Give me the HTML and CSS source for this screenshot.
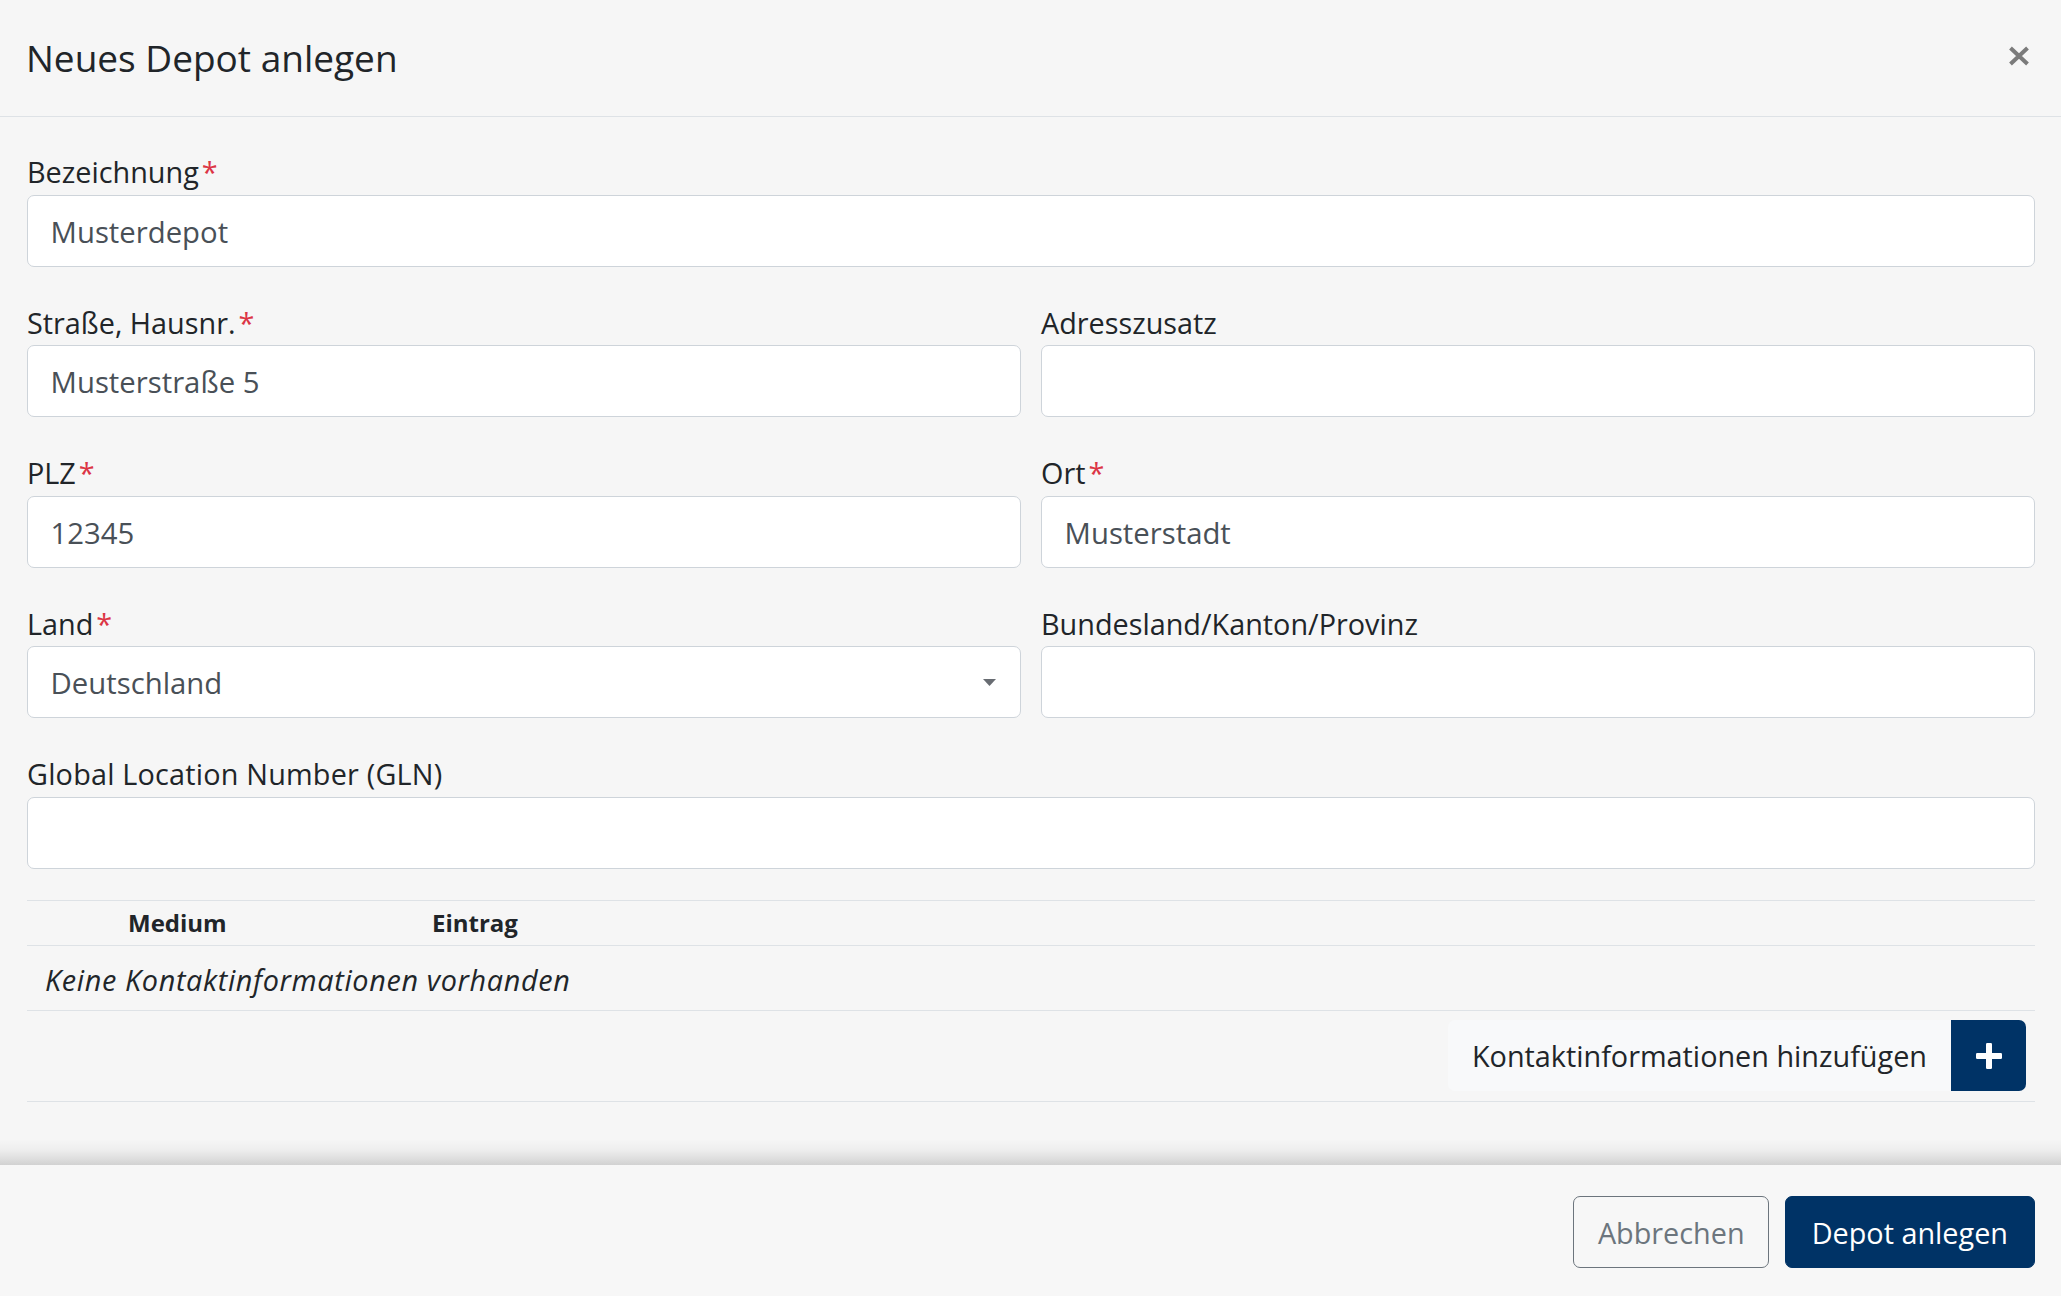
FILE: index.html
```html
<!DOCTYPE html>
<html lang="de">
<head>
<meta charset="utf-8">
<title>Neues Depot anlegen</title>
<link rel="stylesheet" href="styles.css">
</head>
<body>
<div class="modal">
  <header class="modal-header">
    <h5 class="modal-title">Neues Depot anlegen</h5>
    <button class="close" type="button" aria-label="Schließen">
      <svg width="22" height="20" viewBox="0 0 22 20"><path d="M2.5 2 L19.5 18 M19.5 2 L2.5 18" stroke="#7b7b7b" stroke-width="4" fill="none"/></svg>
    </button>
  </header>

  <main class="modal-body">
    <div class="form-group">
      <label class="label">Bezeichnung<span class="req">*</span></label>
      <input class="form-control" type="text" value="Musterdepot">
    </div>

    <div class="form-row">
      <div class="form-group">
        <label class="label">Straße, Hausnr.<span class="req">*</span></label>
        <input class="form-control" type="text" value="Musterstraße 5">
      </div>
      <div class="form-group">
        <label class="label">Adresszusatz</label>
        <input class="form-control" type="text" value="">
      </div>
    </div>

    <div class="form-row">
      <div class="form-group">
        <label class="label">PLZ<span class="req">*</span></label>
        <input class="form-control" type="text" value="12345">
      </div>
      <div class="form-group">
        <label class="label">Ort<span class="req">*</span></label>
        <input class="form-control" type="text" value="Musterstadt">
      </div>
    </div>

    <div class="form-row">
      <div class="form-group">
        <label class="label">Land<span class="req">*</span></label>
        <div class="form-control select">
          <span>Deutschland</span>
          <svg class="caret" width="13" height="7" viewBox="0 0 13 7"><path d="M0 0 H13 L6.5 7 Z" fill="#686c72"/></svg>
        </div>
      </div>
      <div class="form-group">
        <label class="label">Bundesland/Kanton/Provinz</label>
        <input class="form-control" type="text" value="">
      </div>
    </div>

    <div class="form-group last">
      <label class="label gln">Global Location Number (GLN)</label>
      <input class="form-control" type="text" value="">
    </div>

    <table class="contacts">
      <colgroup>
        <col class="col-icon">
        <col class="col-medium">
        <col>
      </colgroup>
      <thead>
        <tr><th></th><th>Medium</th><th>Eintrag</th></tr>
      </thead>
      <tbody>
        <tr><td class="empty" colspan="3">Keine Kontaktinformationen vorhanden</td></tr>
      </tbody>
    </table>
    <div class="actions">
      <div class="btn-group">
        <span class="btn-add-label">Kontaktinformationen hinzufügen</span>
        <button class="btn-plus" type="button" aria-label="Hinzufügen">
          <svg width="26" height="26" viewBox="0 0 26 26"><rect x="10" y="0" width="6" height="26" rx="1.2" fill="#fff"/><rect x="0" y="10" width="26" height="6" rx="1.2" fill="#fff"/></svg>
        </button>
      </div>
    </div>
  </main>

  <div class="scroll-shadow"></div>

  <footer class="modal-footer">
    <button class="btn btn-outline" type="button">Abbrechen</button>
    <button class="btn btn-primary" type="button">Depot anlegen</button>
  </footer>
</div>
</body>
</html>
```

FILE: styles.css
```css
* { box-sizing: border-box; }

html, body {
  margin: 0;
  height: 100%;
}

body {
  font-family: "Open Sans", "Noto Sans", sans-serif;
  font-size: 28.8px;
  color: #212529;
  background: #f6f6f6;
}

.modal {
  display: flex;
  flex-direction: column;
  height: 100vh;
}

.modal-header {
  flex: none;
  display: flex;
  align-items: center;
  justify-content: space-between;
  padding: 30.2px 31px 30.8px 26px;
  border-bottom: 1px solid #dee2e6;
}

.modal-title {
  margin: 0;
  font-size: 37px;
  font-weight: 400;
  line-height: 55px;
  color: #212529;
}

.close {
  display: block;
  width: 22px;
  height: 20px;
  padding: 0;
  margin: 0 0 4px 0;
  border: 0;
  background: none;
}

.close svg { display: block; }

.modal-body {
  flex: 1;
  padding: 33.2px 26px 0 27px;
}

.form-group {
  margin-bottom: 34px;
}

.form-group.last {
  margin-bottom: 31.5px;
}

.form-row {
  display: grid;
  grid-template-columns: 1fr 1fr;
  column-gap: 20px;
}

.label {
  display: block;
  line-height: 43px;
  margin-bottom: 1.5px;
}

.label.gln {
  letter-spacing: 0.2px;
}

.req {
  color: #dc3545;
  margin-left: 3px;
}

.form-control {
  display: block;
  width: 100%;
  height: 72px;
  padding: 2px 21.6px 0 22.6px;
  font: inherit;
  font-size: 29.3px;
  line-height: 43px;
  color: #495057;
  background: #fff;
  border: 1px solid #ced4da;
  border-radius: 7px;
  outline: none;
}

.select {
  display: flex;
  align-items: center;
  justify-content: space-between;
  padding-right: 24px;
}

.caret { display: block; margin-top: -2px; }

.contacts {
  width: 100%;
  border-collapse: collapse;
  table-layout: fixed;
}

.col-icon { width: 87px; }
.col-medium { width: 304px; }

.contacts th {
  font-size: 24px;
  font-weight: 700;
  line-height: 36px;
  padding: 4px 14px 3.6px;
  text-align: left;
  border-top: 1px solid #dee2e6;
  border-bottom: 1px solid #dee2e6;
}

.contacts td.empty {
  font-style: italic;
  letter-spacing: 0.65px;
  line-height: 43.2px;
  padding: 12.6px 18px 8.9px;
  border-bottom: 1px solid #dee2e6;
}

.actions {
  display: flex;
  justify-content: flex-end;
  padding: 9px 9px 10.3px;
  border-bottom: 1px solid #dee2e6;
}

.btn-group {
  display: flex;
  height: 70.7px;
}

.btn-add-label {
  display: flex;
  align-items: center;
  padding: 0 24px;
  background: #f8f9fa;
  border-radius: 7px 0 0 7px;
  color: #212529;
}

.btn-plus {
  display: flex;
  align-items: center;
  justify-content: center;
  width: 75px;
  padding: 0;
  border: 0;
  background: #003366;
  border-radius: 0 7px 7px 0;
}

.btn-plus svg { display: block; }

.scroll-shadow {
  flex: none;
  height: 26px;
  background: linear-gradient(to bottom,
    rgba(0, 0, 0, 0) 0%,
    rgba(0, 0, 0, 0.03) 40%,
    rgba(0, 0, 0, 0.1) 78%,
    rgba(0, 0, 0, 0.15) 100%);
}

.modal-footer {
  flex: none;
  height: 131px;
  display: flex;
  justify-content: flex-end;
  align-items: flex-start;
  gap: 15.6px;
  padding: 31px 26px 0 0;
  background: #f7f7f7;
}

.btn {
  height: 71.7px;
  padding: 2px 23.5px 0;
  font: inherit;
  line-height: 43px;
  border-radius: 7px;
  border: 1px solid transparent;
}

.btn-outline {
  color: #6c757d;
  border-color: #6c757d;
  background: transparent;
}

.btn-primary {
  color: #fff;
  background: #003366;
  border-color: #003366;
  padding: 2px 26px 0;
}
```
